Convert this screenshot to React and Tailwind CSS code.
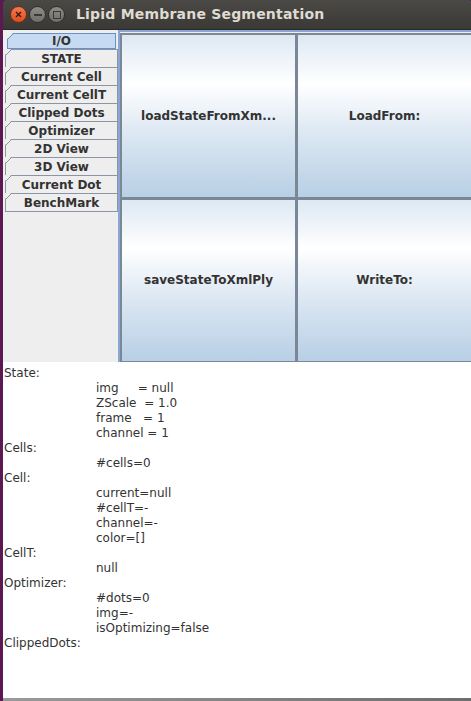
import React from "react";

const tabs = [
  "I/O",
  "STATE",
  "Current Cell",
  "Current CellT",
  "Clipped Dots",
  "Optimizer",
  "2D View",
  "3D View",
  "Current Dot",
  "BenchMark",
];

const buttons = ["loadStateFromXm...", "LoadFrom:", "saveStateToXmlPly", "WriteTo:"];

const lines = [
  { t: "State:" },
  { t: "img     = null", i: true },
  { t: "ZScale  = 1.0", i: true },
  { t: "frame   = 1", i: true },
  { t: "channel = 1", i: true },
  { t: "Cells:" },
  { t: "#cells=0", i: true },
  { t: "Cell:" },
  { t: "current=null", i: true },
  { t: "#cellT=-", i: true },
  { t: "channel=-", i: true },
  { t: "color=[]", i: true },
  { t: "CellT:" },
  { t: "null", i: true },
  { t: "Optimizer:" },
  { t: "#dots=0", i: true },
  { t: "img=-", i: true },
  { t: "isOptimizing=false", i: true },
  { t: "ClippedDots:" },
];

const font = { fontFamily: '"DejaVu Sans", "Liberation Sans", sans-serif' };

const Tab = ({ label, selected }) => (
  <div
    className={`relative flex items-center justify-center text-[12px] font-bold text-[#333] border ${
      selected
        ? "bg-[#c6dbf1] border-[#6a8fc8] mx-[2px] h-[16px] mb-px"
        : "bg-[#eeeeee] border-[#8b96a2] h-[19px] -mt-px"
    }`}
  >
    <svg className="absolute -left-px -top-px" width="7" height="7" viewBox="0 0 7 7">
      <path d="M0 0 L6 0 L0 6 Z" fill="#eeeeee" />
      <path d="M0.5 6.5 L6.5 0.5" stroke={selected ? "#6a8fc8" : "#8b96a2"} strokeWidth="1" fill="none" />
    </svg>
    <span className="leading-none">{label}</span>
  </div>
);

export default function App() {
  return (
    <div className="w-[471px] h-[701px] bg-[#5b1851] flex overflow-hidden" style={font}>
      <div className="ml-[3px] flex-1 flex flex-col">
        {/* title bar */}
        <div className="h-[30px] flex items-center rounded-t-[4px] bg-gradient-to-b from-[#4a4945] to-[#3a3935] border-b border-[#2a2926]">
          <div className="flex items-center gap-[2px] ml-[7px]">
            <div className="w-[17px] h-[17px] rounded-full bg-gradient-to-b from-[#f37a4d] to-[#dc4d1e] border border-[#6b2c16] flex items-center justify-center">
              <svg width="7" height="7" viewBox="0 0 7 7">
                <path d="M1 1 L6 6 M6 1 L1 6" stroke="#3a1a10" strokeWidth="1.4" />
              </svg>
            </div>
            <div className="w-[17px] h-[17px] rounded-full bg-gradient-to-b from-[#8d8c87] to-[#6f6e6a] border border-[#2f2e2b] flex items-center justify-center">
              <div className="w-[8px] h-[2px] bg-[#3a3936]" />
            </div>
            <div className="w-[17px] h-[17px] rounded-full bg-gradient-to-b from-[#8d8c87] to-[#6f6e6a] border border-[#2f2e2b] flex items-center justify-center">
              <div className="w-[8px] h-[8px] border-[1.5px] border-[#3a3936]" />
            </div>
          </div>
          <span className="ml-[11px] text-[14px] font-bold text-[#dfdbd2] tracking-[0.2px]">
            Lipid Membrane Segmentation
          </span>
        </div>

        {/* top section */}
        <div className="h-[332px] flex bg-[#eeeeee]">
          <div className="w-[115px] pl-[2px] pt-[3px] flex flex-col">
            {tabs.map((t, i) => (
              <Tab key={t} label={t} selected={i === 0} />
            ))}
          </div>
          <div className="flex-1 border-l-2 border-t-2 border-[#8aa6d2] pt-px">
            <div className="grid grid-cols-2 grid-rows-2 h-[329px] w-[352px]">
              {buttons.map((b) => (
                <div
                  key={b}
                  className="border-2 border-[#7a8796] -mr-px -mb-px flex items-center justify-center text-[12px] font-bold text-[#333] bg-[linear-gradient(to_bottom,#dde8f3_0%,#ffffff_30%,#dde8f3_60%,#b8cfe5_100%)]"
                >
                  {b}
                </div>
              ))}
            </div>
          </div>
        </div>

        {/* text area */}
        <div className="flex-1 bg-white pt-[4px] pl-px text-[12px] text-[#333] leading-[15px]">
          {lines.map((l, i) => (
            <div key={i} className={`whitespace-pre ${l.i ? "pl-[92px]" : ""}`}>
              {l.t}
            </div>
          ))}
        </div>
        <div className="h-[3px] bg-gradient-to-r from-[#9a9a9a] to-[#6e6e6e]" />
      </div>
    </div>
  );
}
